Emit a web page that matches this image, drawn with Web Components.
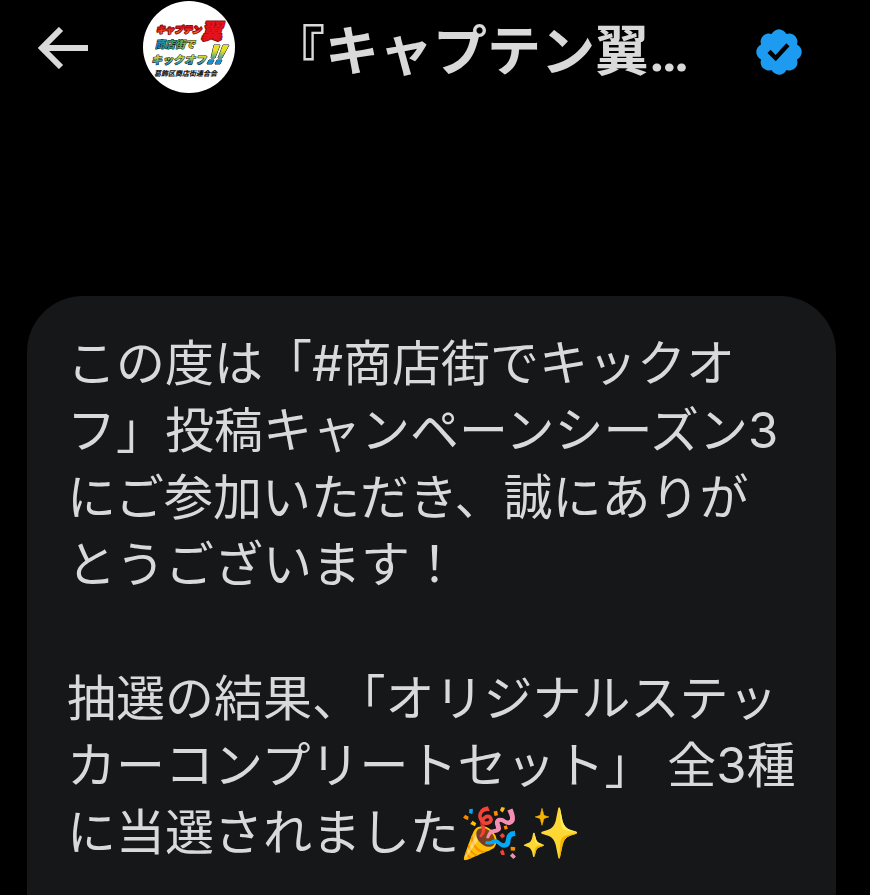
<!DOCTYPE html>
<html lang="ja">
<head>
<meta charset="UTF-8">
<meta name="viewport" content="width=device-width, initial-scale=1">
<title>メッセージ</title>
<style>
    :root {
        --color-bg: #000;
        --color-bubble: #151719;
        --color-text: #d9d9da;
        --color-verified: #1d9bf0;
        --font-main: Inter, "Noto Sans CJK JP", sans-serif;
        --font-heading: Roboto, "Noto Sans CJK JP", sans-serif;
    }
    body {
        margin: 0;
        background: var(--color-bg);
        color: var(--color-text);
        font-family: var(--font-main);
    }
</style>
</head>
<body>
<dm-screen>
    <chat-header slot="header">
        <campaign-avatar slot="avatar"></campaign-avatar>
        <span slot="name">『キャプテン翼…</span>
        <verified-badge slot="badge"></verified-badge>
    </chat-header>
    <message-bubble>
        <p>この度は「#商店街でキックオフ」投稿キャンペーンシーズン3にご参加いただき、誠にありがとうございます！</p>
        <p>抽選の結果、「オリジナルステッカーコンプリートセット」 全3種に当選されました🎉✨</p>
    </message-bubble>
</dm-screen>

<script>
class DmScreen extends HTMLElement {
    constructor() {
        super();
        this.attachShadow({ mode: 'open' });
        this.shadowRoot.innerHTML = /*html*/`
        <style>
            :host {
                display: flex;
                flex-direction: column;
                min-height: 100vh;
            }
            main {
                flex: 1;
                display: flex;
                flex-direction: column;
                padding: 192px 34px 0 27px;
            }
            ::slotted(message-bubble) { flex: 1; }
        </style>
        <slot name="header"></slot>
        <main><slot></slot></main>`;
    }
}
customElements.define('dm-screen', DmScreen);

class ChatHeader extends HTMLElement {
    constructor() {
        super();
        this.attachShadow({ mode: 'open' });
        this.shadowRoot.innerHTML = /*html*/`
        <style>
            :host { display: block; }
            header {
                display: flex;
                align-items: center;
                height: 104px;
                padding: 0 68px 0 38px;
                box-sizing: border-box;
            }
            button {
                display: flex;
                padding: 0 0 8px;
                border: 0;
                background: none;
                color: inherit;
                cursor: pointer;
            }
            .avatar {
                margin-left: 54px;
                padding-bottom: 10px;
            }
            h1 {
                flex: 1;
                min-width: 0;
                margin: 0 0 0 36px;
                padding-top: 2px;
                font-family: var(--font-heading);
                font-size: 54px;
                line-height: 80px;
                font-weight: 700;
                white-space: nowrap;
            }
        </style>
        <header>
            <button type="button" aria-label="戻る">
                <svg width="51" height="42" viewBox="0 0 51 42" fill="none" stroke="currentColor" stroke-width="6">
                    <path d="M23 2 4 21l19 19M4 21h46"/>
                </svg>
            </button>
            <div class="avatar"><slot name="avatar"></slot></div>
            <h1><slot name="name"></slot></h1>
            <slot name="badge"></slot>
        </header>`;
    }
}
customElements.define('chat-header', ChatHeader);

class CampaignAvatar extends HTMLElement {
    constructor() {
        super();
        this.attachShadow({ mode: 'open' });
        this.shadowRoot.innerHTML = /*html*/`
        <style>
            :host {
                display: block;
                width: 92px;
                height: 92px;
                border-radius: 50%;
                overflow: hidden;
                background: #fff;
            }
            svg { display: block; }
            text {
                font-family: "Noto Sans CJK JP", sans-serif;
                font-weight: 900;
                font-style: italic;
            }
            .line {
                stroke: #151515;
                stroke-width: 1;
                paint-order: stroke;
                stroke-linejoin: round;
            }
            .name {
                stroke: #8c1010;
                stroke-width: 2;
            }
        </style>
        <svg width="92" height="92" viewBox="0 0 92 92">
            <defs>
                <linearGradient id="fire" x1="0" y1="0" x2="0" y2="1">
                    <stop offset="0.4" stop-color="#e3121b"/>
                    <stop offset="0.9" stop-color="#f6a01c"/>
                </linearGradient>
                <linearGradient id="street" x1="0" y1="0" x2="1" y2="0">
                    <stop offset="0" stop-color="#1583c5"/>
                    <stop offset="0.5" stop-color="#35a06a"/>
                    <stop offset="1" stop-color="#e9d520"/>
                </linearGradient>
                <linearGradient id="kick" x1="0" y1="0" x2="0" y2="1">
                    <stop offset="0.3" stop-color="#e8df20"/>
                    <stop offset="0.8" stop-color="#1292d3"/>
                </linearGradient>
            </defs>
            <text class="line name" x="13" y="32" font-size="9" fill="url(#fire)">キャプテン</text>
            <text class="line name" x="58" y="38" font-size="21" fill="#e3121b">翼</text>
            <text class="line" x="12" y="47" font-size="10" fill="url(#street)">商店街で</text>
            <text class="line" x="8" y="63" font-size="11" fill="url(#kick)">キックオフ</text>
            <path class="line" fill="url(#kick)" d="M71 44h6l-5 13h-4zM80 44h6l-7 13h-4zM66 59h5l-2 4h-5zM74 59h5l-2 4h-5z"/>
            <text x="11" y="75" font-size="7" fill="#222">葛飾区商店街連合会</text>
        </svg>`;
    }
}
customElements.define('campaign-avatar', CampaignAvatar);

class VerifiedBadge extends HTMLElement {
    constructor() {
        super();
        this.attachShadow({ mode: 'open' });
        this.shadowRoot.innerHTML = /*html*/`
        <style>
            :host {
                display: block;
                color: var(--color-verified);
            }
            svg { display: block; }
        </style>
        <svg width="46" height="46" viewBox="1.5 1.5 19 19" fill="currentColor" role="img" aria-label="認証済みアカウント">
            <path d="M20.396 11c-.018-.646-.215-1.275-.57-1.816-.354-.54-.852-.972-1.438-1.246.223-.607.27-1.264.14-1.897-.131-.634-.437-1.218-.882-1.687-.47-.445-1.053-.75-1.687-.882-.633-.13-1.29-.083-1.897.14-.273-.587-.704-1.086-1.245-1.44S11.647 1.62 11 1.604c-.646.017-1.273.213-1.813.568s-.969.854-1.24 1.44c-.608-.223-1.267-.272-1.902-.14-.635.13-1.22.436-1.69.882-.445.47-.749 1.055-.878 1.688-.13.633-.08 1.29.144 1.896-.587.274-1.087.705-1.443 1.245-.356.54-.555 1.17-.574 1.817.02.647.218 1.276.574 1.817.356.54.856.972 1.443 1.245-.224.606-.274 1.263-.144 1.896.13.634.433 1.218.877 1.688.47.443 1.054.747 1.687.878.633.132 1.29.084 1.897-.136.274.586.705 1.084 1.246 1.439.54.354 1.17.551 1.816.569.647-.016 1.276-.213 1.817-.567s.972-.854 1.245-1.44c.604.239 1.266.296 1.903.164.636-.132 1.22-.447 1.68-.907.46-.46.776-1.044.908-1.681s.075-1.299-.165-1.903c.586-.274 1.084-.705 1.439-1.246.354-.54.551-1.17.569-1.816zM9.662 14.85l-3.429-3.428 1.293-1.302 2.072 2.072 4.4-4.794 1.347 1.246z"/>
        </svg>`;
    }
}
customElements.define('verified-badge', VerifiedBadge);

class MessageBubble extends HTMLElement {
    constructor() {
        super();
        this.attachShadow({ mode: 'open' });
        this.shadowRoot.innerHTML = /*html*/`
        <style>
            :host {
                display: flex;
                flex-direction: column;
                gap: 67px;
                padding: 34px 40px 24px;
                border-radius: 56px 56px 0 0;
                background: var(--color-bubble);
                font-size: 49px;
                line-height: 67px;
            }
            ::slotted(p) { margin: 0; }
        </style>
        <slot></slot>`;
    }
}
customElements.define('message-bubble', MessageBubble);
</script>
</body>
</html>
